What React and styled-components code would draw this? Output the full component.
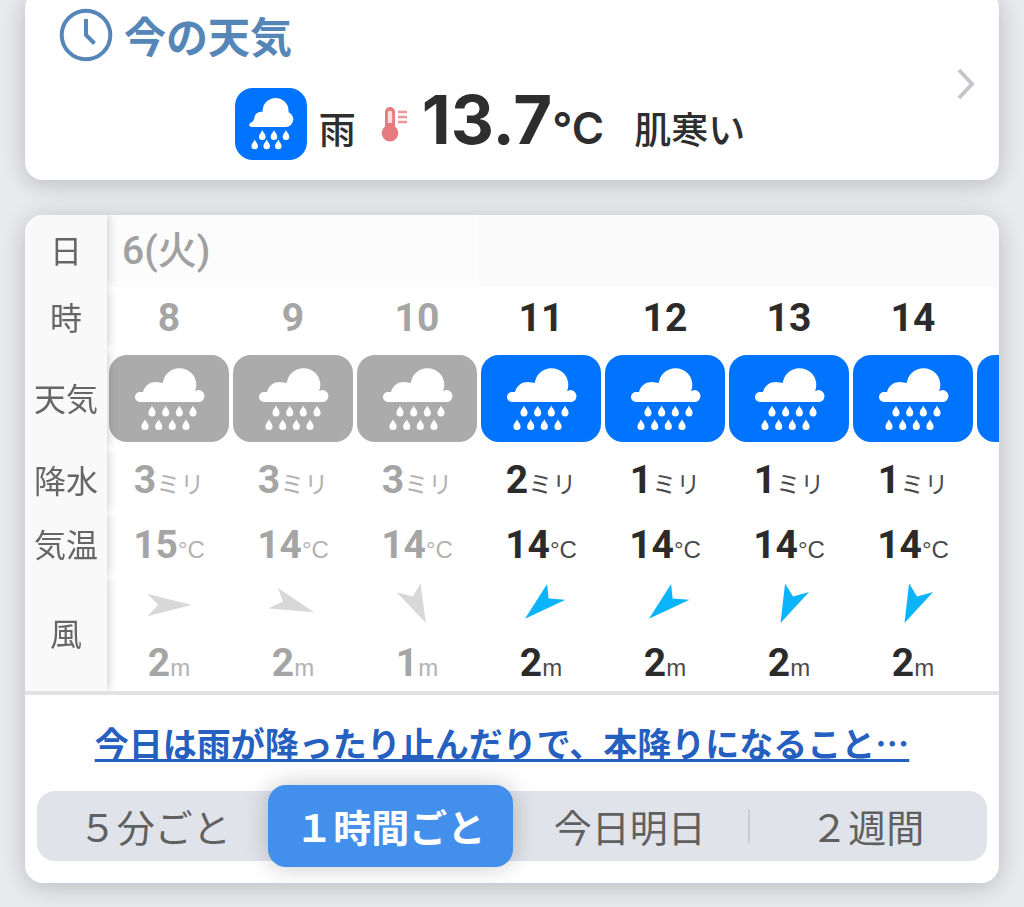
import React, { useState } from 'react'
import styled, { createGlobalStyle, css } from 'styled-components'

const jp = '"Noto Sans CJK JP", sans-serif'

const hours = [
  { hour: 8, rain: 3, temp: 15, deg: 0, wind: 2, past: true },
  { hour: 9, rain: 3, temp: 14, deg: 22, wind: 2, past: true },
  { hour: 10, rain: 3, temp: 14, deg: 67, wind: 1, past: true },
  { hour: 11, rain: 2, temp: 14, deg: 135, wind: 2 },
  { hour: 12, rain: 1, temp: 14, deg: 135, wind: 2 },
  { hour: 13, rain: 1, temp: 14, deg: 112, wind: 2 },
  { hour: 14, rain: 1, temp: 14, deg: 112, wind: 2 },
]

const tabs = ['５分ごと', '１時間ごと', '今日明日', '２週間']

const drop = 'M0 -6C1 -3 4 -1 4 2a4 4 0 0 1 -8 0C-4 -1 -1 -3 0 -6Z'

const Drops = ({ points, scale = 1 }) =>
  points.map(([x, y]) => (
    <path key={`${x}-${y}`} d={drop} transform={`translate(${x} ${y}) scale(${scale})`} />
  ))

const HeavyRain = () => (
  <svg viewBox="0 0 120 87" width="120" height="87" fill="#fff" aria-label="雨">
    <circle cx="70.5" cy="30" r="16.8" />
    <path d="M31 47a5 5 0 0 1 0 -10H34C36 30 41 27 47 27L54 28L60 36H87.3V35.5A6 6 0 1 1 88.5 47Z" />
    <Drops
      scale={0.9}
      points={[[43, 56], [56.7, 56], [70.3, 56], [84, 56], [36, 69.7], [49.7, 69.7], [63.3, 69.7], [77, 69.7]]}
    />
  </svg>
)

const Rain = () => (
  <svg viewBox="0 0 72 72" width="72" height="72" fill="#fff" aria-label="雨">
    <circle cx="40.6" cy="23" r="13" />
    <circle cx="50.7" cy="31.3" r="7.6" />
    <path d="M16 38.9C13.5 38.5 14 35.5 16 34.5C18 34 19 32 19.5 29C20.5 25 23.5 23.7 28 23.7H40L51 32V38.9Z" />
    <Drops
      scale={0.82}
      points={[[27.3, 47], [39, 47], [51, 47], [19.7, 56.3], [31.7, 56.3], [43.3, 56.3]]}
    />
  </svg>
)

const Clock = () => (
  <svg viewBox="0 0 54 54" width="54" height="54" fill="none" stroke="#5686b8" strokeWidth="4">
    <circle cx="27" cy="27" r="24.3" />
    <path d="M27 11V27L35.5 35.5" strokeLinejoin="round" />
  </svg>
)

const Thermometer = () => (
  <svg viewBox="0 0 28 38" width="28" height="38">
    <path
      d="M5 7a5 5 0 0 1 10 0V21.5a8.3 8.3 0 1 1 -10 0Z"
      fill="#e57b7e"
    />
    <path d="M7.8 8a2.2 2.2 0 0 1 4.4 0V18H7.8Z" fill="#fbdede" />
    <path d="M18 7H27M18 12H27M18 17H27" stroke="#ed979a" strokeWidth="2.4" />
  </svg>
)

const Chevron = () => (
  <svg viewBox="0 0 18 32" width="18" height="32" fill="none" stroke="#c4c4cb" strokeWidth="4">
    <path d="M2 2L15 16L2 30" />
  </svg>
)

const Arrow = ({ deg, past }) => (
  <svg viewBox="-24 -22 48 44" width="48" height="44">
    <path
      d="M21 0L-20 -12L-10 0L-20 12Z"
      fill={past ? '#d8d8d8' : '#0ab4fb'}
      transform={`scale(1.08 0.93) rotate(${deg})`}
    />
  </svg>
)

const App = () => {
  const [active, setActive] = useState(1)
  return (
    <>
      <GlobalStyle />
      <Page>
        <NowCard href="#now">
          <NowBody>
            <Title>
              <Clock />
              今の天気
            </Title>
            <Now>
              <NowIcon>
                <Rain />
              </NowIcon>
              <Word>雨</Word>
              <Thermometer />
              <Degrees>
                13.7<small>°C</small>
              </Degrees>
              <Word>肌寒い</Word>
            </Now>
          </NowBody>
          <Chevron />
        </NowCard>

        <Card>
          <Scroller>
            <Table>
              <colgroup>
                <LabelCol />
                {hours.map((h) => (
                  <HourCol key={h.hour} />
                ))}
                <HourCol />
              </colgroup>
              <tbody>
                <Row $h={72}>
                  <Label scope="row">日</Label>
                  <DateCell colSpan={3}>6(火)</DateCell>
                  <DateCell colSpan={5} $shade />
                </Row>
                <Row $h={62}>
                  <Label scope="row">時</Label>
                  {hours.map((h) => (
                    <Cell key={h.hour} $past={h.past}>{h.hour}</Cell>
                  ))}
                </Row>
                <Row $h={99}>
                  <Label scope="row">天気</Label>
                  {hours.map((h) => (
                    <Cell key={h.hour} $past={h.past}>
                      <Tile $past={h.past}>
                        <HeavyRain />
                      </Tile>
                    </Cell>
                  ))}
                  <Cell>
                    <Tile>
                      <HeavyRain />
                    </Tile>
                  </Cell>
                </Row>
                <Row $h={65}>
                  <Label scope="row">降水</Label>
                  {hours.map((h) => (
                    <Cell key={h.hour} $past={h.past} $drop={4}>{h.rain}<Unit>ミリ</Unit></Cell>
                  ))}
                </Row>
                <Row $h={64}>
                  <Label scope="row">気温</Label>
                  {hours.map((h) => (
                    <Cell key={h.hour} $past={h.past} $drop={4}>{h.temp}<Unit>°C</Unit></Cell>
                  ))}
                </Row>
                <Row $h={55}>
                  <Label scope="rowgroup" rowSpan={2}>風</Label>
                  {hours.map((h) => (
                    <Cell key={h.hour}>
                      <Arrow deg={h.deg} past={h.past} />
                    </Cell>
                  ))}
                </Row>
                <Row $h={59}>
                  {hours.map((h) => (
                    <Cell key={h.hour} $past={h.past} $drop={8}>{h.wind}<Unit>m</Unit></Cell>
                  ))}
                </Row>
              </tbody>
            </Table>
          </Scroller>
          <Comment>
            <a href="#comment">今日は雨が降ったり止んだりで、本降りになること…</a>
          </Comment>
          <Tabs role="tablist">
            {tabs.map((t, i) => (
              <Tab
                key={t}
                type="button"
                role="tab"
                aria-selected={i === active}
                $active={i === active}
                $line={i < tabs.length - 1 && i + 1 !== active}
                onClick={() => setActive(i)}
              >
                {t}
              </Tab>
            ))}
          </Tabs>
        </Card>
      </Page>
    </>
  )
}

const GlobalStyle = createGlobalStyle`
  body {
    margin: 0;
    background: #e9eaee;
    font-family: ${jp};
    color: #2e2e2e;
  }
  svg {
    display: block;
    flex-shrink: 0;
  }
`

const Page = styled.main`
  box-sizing: border-box;
  min-height: 100vh;
  padding: 0 25px 24px;
  overflow: hidden;
`

const surface = css`
  background: #fff;
  border-radius: 18px;
  box-shadow: 0 4px 24px rgba(0, 0, 10, 0.2);
`

const NowCard = styled.a`
  ${surface}
  display: flex;
  align-items: center;
  gap: 36px;
  margin-top: -10px;
  padding: 18px 24px 20px 34px;
  color: inherit;
  text-decoration: none;
`

const NowBody = styled.div`
  flex: 1;
`

const Title = styled.h1`
  display: flex;
  align-items: center;
  gap: 11px;
  height: 54px;
  margin: 0;
  font-size: 42px;
  line-height: 50px;
  font-weight: 700;
  color: #5686b8;
`

const Now = styled.div`
  display: flex;
  align-items: center;
  justify-content: center;
  height: 72px;
  margin-top: 26px;
  gap: 12px;
`

const NowIcon = styled.span`
  border-radius: 18px;
  background: #0074ff;
`

const Word = styled.span`
  margin-right: 12px;
  padding-top: 8px;
  font-size: 37px;
  line-height: 40px;
  font-weight: 500;
  &:last-child {
    margin-right: 0;
  }
`

const Degrees = styled.strong`
  margin: 0 18px 0 2px;
  padding-bottom: 8px;
  font-family: Inter, sans-serif;
  font-size: 67px;
  line-height: 80px;
  font-weight: 700;
  small {
    font-size: 44px;
    line-height: 44px;
    font-weight: 600;
  }
`

const Card = styled.section`
  ${surface}
  margin-top: 35px;
  overflow: hidden;
`

const Scroller = styled.div`
  overflow: hidden;
  border-bottom: 4px solid #e2e2e2;
`

const Table = styled.table`
  width: 1074px;
  table-layout: fixed;
  border-collapse: separate;
  border-spacing: 0;
`

const LabelCol = styled.col`
  width: 82px;
`

const HourCol = styled.col`
  width: 124px;
`

const Row = styled.tr`
  height: ${(p) => p.$h}px;
`

const Label = styled.th`
  position: sticky;
  left: 0;
  z-index: 1;
  padding: 0 0 4px;
  background: #f9f9f9;
  box-shadow: 0 0 10px rgba(0, 0, 0, 0.25);
  clip-path: inset(0 -20px 0 0);
  font-size: 32px;
  line-height: 32px;
  font-weight: 400;
  color: #666;
`

const number = css`
  font-family: Roboto, ${jp};
  font-size: 39px;
  line-height: 40px;
  font-weight: 700;
`

const DateCell = styled.td`
  ${number}
  padding: 0 15px;
  background: ${(p) => (p.$shade ? '#fafafa' : '#fcfcfc')};
  font-weight: 500;
  color: #a0a0a0;
`

const Cell = styled.td`
  ${number}
  padding: ${(p) => p.$drop || 0}px 2px 0;
  text-align: center;
  white-space: nowrap;
  color: ${(p) => (p.$past ? '#a5a5a5' : '#2b2b2b')};
  > svg {
    margin: 0 auto;
  }
`

const Unit = styled.span`
  font-family: "Liberation Sans", ${jp};
  font-size: 24px;
  font-weight: 400;
  opacity: 0.85;
`

const Tile = styled.div`
  border-radius: 18px;
  background: ${(p) => (p.$past ? '#ababab' : '#0074ff')};
`

const Comment = styled.p`
  margin: 0;
  padding: 24px 32px 24px 12px;
  font-size: 34px;
  line-height: 48px;
  font-weight: 700;
  text-align: center;
  a {
    color: #2560c0;
    text-underline-offset: 2px;
    text-decoration-thickness: 3px;
  }
`

const Tabs = styled.div`
  display: grid;
  grid-template-columns: repeat(4, 1fr);
  margin: 0 12px 22px;
  height: 70px;
  border-radius: 18px;
  background: #e0e3ea;
`

const Tab = styled.button`
  display: flex;
  align-items: center;
  justify-content: center;
  margin: 18px 0;
  padding: 0;
  border: none;
  border-right: 2px solid ${(p) => (p.$line ? '#c9ccd2' : 'transparent')};
  background: none;
  font-family: ${jp};
  font-size: 38px;
  line-height: 32px;
  font-weight: 400;
  white-space: nowrap;
  color: #606060;
  cursor: pointer;
  ${(p) =>
    p.$active &&
    css`
      margin: -6px -1px -6px -7px;
      border: none;
      border-radius: 18px;
      background: #438fec;
      box-shadow: 0 0 24px rgba(0, 0, 0, 0.22);
      font-weight: 700;
      color: #fff;
    `}
`

export default App
